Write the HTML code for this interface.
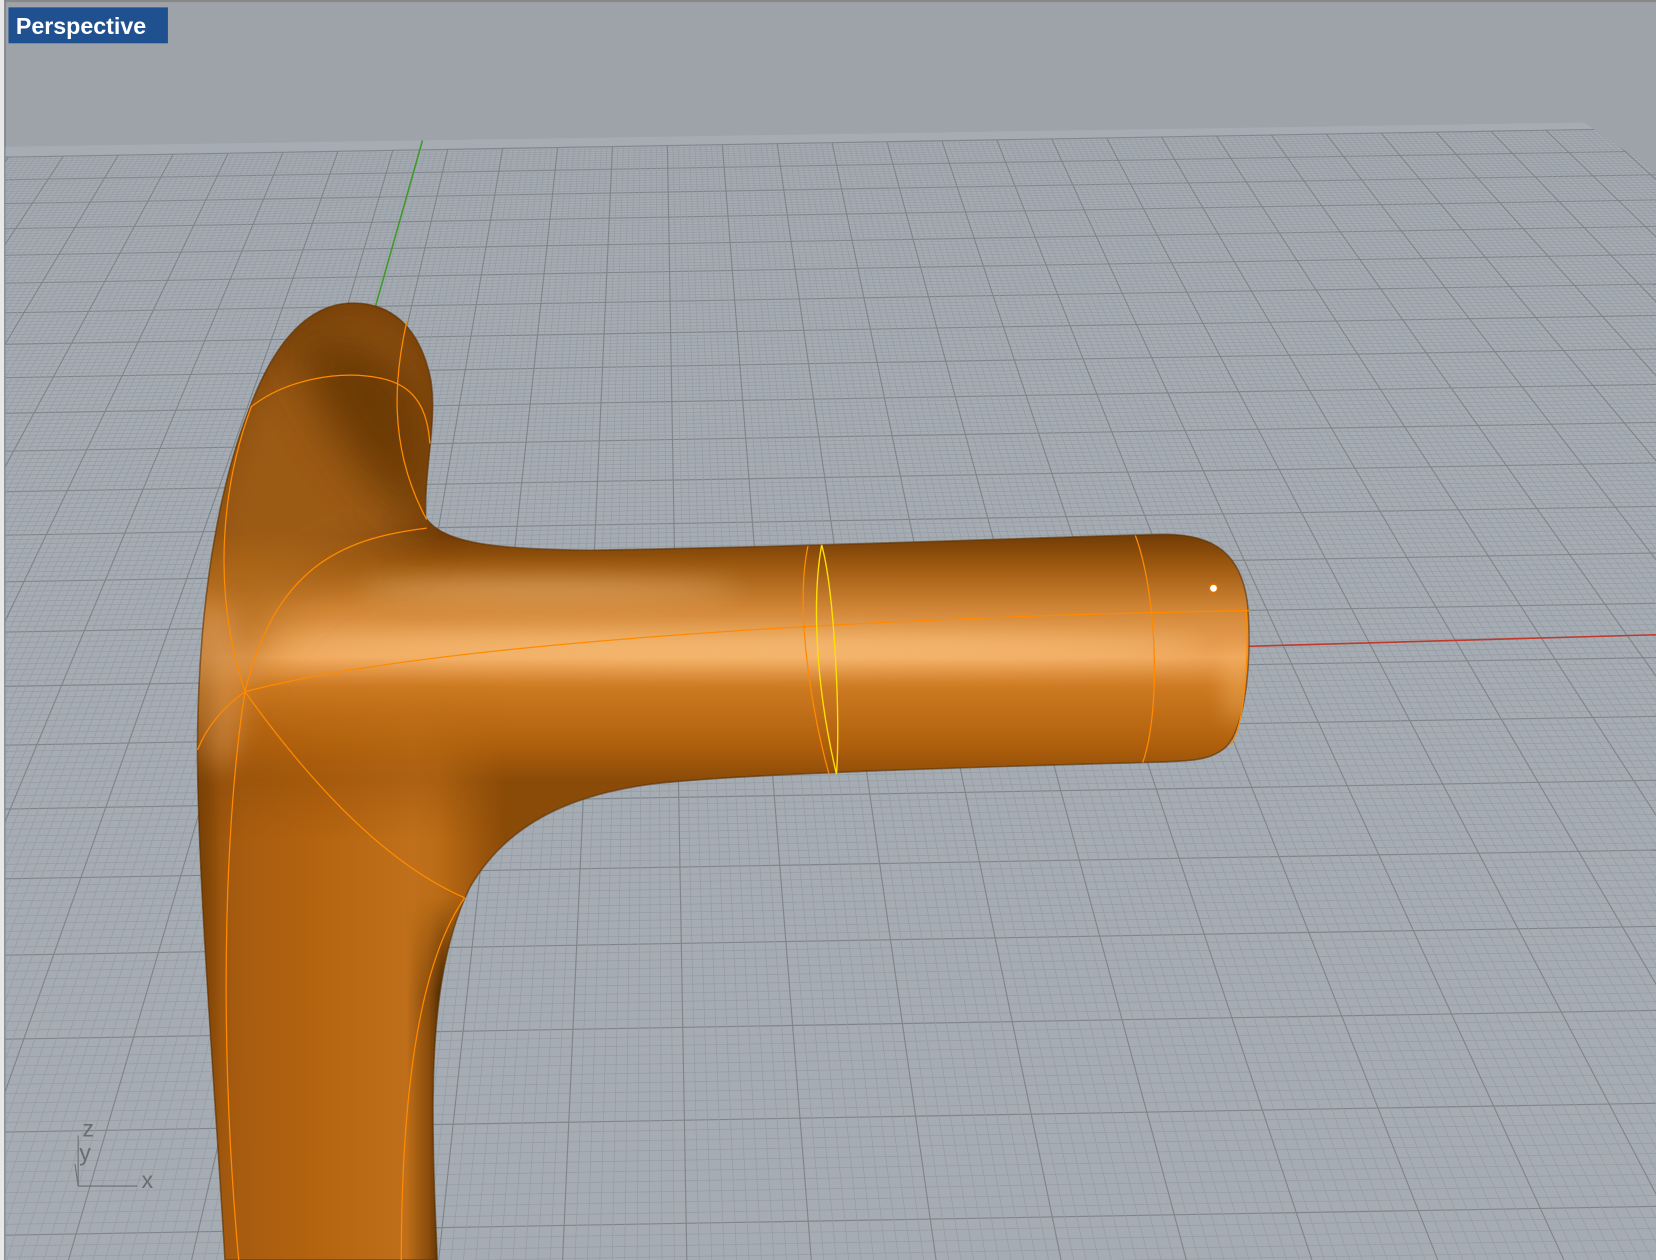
<!DOCTYPE html>
<html><head><meta charset="utf-8"><style>
html,body{margin:0;padding:0;width:1656px;height:1260px;overflow:hidden;background:#9ea3aa}
svg{display:block}
</style></head><body>
<svg id="s" width="1656" height="1260" viewBox="0 0 1568 1193" preserveAspectRatio="none" xmlns="http://www.w3.org/2000/svg">
<defs>
<clipPath id="plane"><polygon points="5,139 1500,116 1568,163 1568,1193 5,1193"/></clipPath>
<linearGradient id="arm" x1="0" y1="505" x2="0" y2="740" gradientUnits="userSpaceOnUse">
<stop offset="0" stop-color="#6e3a06"/><stop offset="0.12" stop-color="#9a560e"/>
<stop offset="0.3" stop-color="#d08536"/><stop offset="0.5" stop-color="#eea55a"/>
<stop offset="0.62" stop-color="#cd7a22"/><stop offset="0.85" stop-color="#b0600c"/><stop offset="1" stop-color="#8a4a08"/>
</linearGradient>
<linearGradient id="leg" x1="185" y1="0" x2="480" y2="0" gradientUnits="userSpaceOnUse">
<stop offset="0" stop-color="#7a4208"/><stop offset="0.08" stop-color="#a45a10"/>
<stop offset="0.4" stop-color="#b5640f"/><stop offset="0.7" stop-color="#c0701a"/><stop offset="0.78" stop-color="#bb6c16" stop-opacity="1"/><stop offset="1" stop-color="#b86812" stop-opacity="0"/>
</linearGradient>
<linearGradient id="edge" x1="385" y1="0" x2="418" y2="0" gradientUnits="userSpaceOnUse">
<stop offset="0" stop-color="#6a3804" stop-opacity="0"/><stop offset="0.6" stop-color="#7a4208" stop-opacity="0.7"/><stop offset="1" stop-color="#4a2802" stop-opacity="1"/>
</linearGradient>
<linearGradient id="fadeY" x1="0" y1="640" x2="0" y2="900" gradientUnits="userSpaceOnUse">
<stop offset="0" stop-color="#fff" stop-opacity="0"/><stop offset="0.6" stop-color="#fff" stop-opacity="1"/><stop offset="1" stop-color="#fff" stop-opacity="1"/>
</linearGradient>
<linearGradient id="fadeE" x1="0" y1="850" x2="0" y2="940" gradientUnits="userSpaceOnUse">
<stop offset="0" stop-color="#fff" stop-opacity="0"/><stop offset="1" stop-color="#fff" stop-opacity="1"/>
</linearGradient>
<mask id="legmask" maskUnits="userSpaceOnUse" x="0" y="0" width="1568" height="1193"><rect x="0" y="0" width="1568" height="1193" fill="url(#fadeY)"/></mask>
<mask id="edgemask" maskUnits="userSpaceOnUse" x="0" y="0" width="1568" height="1193"><rect x="0" y="0" width="1568" height="1193" fill="url(#fadeE)"/></mask>
<clipPath id="shape"><path id="sp" d=""/></clipPath>
<filter id="b8" filterUnits="userSpaceOnUse" x="0" y="0" width="1568" height="1193"><feGaussianBlur stdDeviation="12"/></filter>
<filter id="b20" filterUnits="userSpaceOnUse" x="0" y="0" width="1568" height="1193"><feGaussianBlur stdDeviation="22"/></filter>
</defs>
<rect x="0" y="0" width="1568" height="1193" fill="#9ea3aa"/>
<rect x="0" y="0" width="1568" height="2" fill="#888"/>
<rect x="0" y="0" width="4" height="1193" fill="#e8e8e8"/>
<rect x="4" y="0" width="1.5" height="1193" fill="#7d8186"/>
<g clip-path="url(#plane)">
<rect x="0" y="100" width="1568" height="1100" fill="#a6acb3"/>
<g id="grid" transform="rotate(-1.0 800 600)"></g>
</g>
<line x1="400" y1="133" x2="355" y2="292" stroke="#3f9a2a" stroke-width="1.5"/>
<line x1="1180" y1="612" x2="1568" y2="601" stroke="#c0392b" stroke-width="1.5"/>
<g id="obj"></g>
<rect x="8" y="7" width="151" height="34" fill="#1f5190"/>
<text x="15" y="32" font-family="Liberation Sans, sans-serif" font-weight="bold" font-size="22" fill="#fff">Perspective</text>
<g stroke="#6a6e73" stroke-width="1" fill="none">
<line x1="74" y1="1123" x2="130" y2="1123"/><line x1="74" y1="1123" x2="74" y2="1075"/><line x1="74" y1="1123" x2="71" y2="1102"/>
</g>
<g font-family="Liberation Sans, sans-serif" font-size="22" fill="#6a6e73">
<text x="78" y="1076">z</text><text x="75" y="1099">y</text><text x="134" y="1125">x</text>
</g>
</svg>
<script>
var NS="http://www.w3.org/2000/svg";
function el(p,t,a){var e=document.createElementNS(NS,t);for(var k in a)e.setAttribute(k,a[k]);p.appendChild(e);return e;}
var g=document.getElementById('grid');
var vx=640,vy=-700,C=835*40,t0=40;
for(var i=0;i<=400;i++){var t=t0-i*0.1; if(t<=14)break; var y=vy+C/t; if(y>1260)break;
 var maj=(i%10==0);
 el(g,'line',{x1:-200,y1:y,x2:1800,y2:y,stroke:maj?'#80858b':'#969ca3','stroke-width':maj?1.1:0.7});}
var base=135, sp=52;
for(var k=-400;k<=400;k++){var x0=640+k*sp/10; var maj=(k%10==0);
 var x2=vx+(x0-vx)*(1400-vy)/(base-vy);
 el(g,'line',{x1:x0,y1:base,x2:x2,y2:1400,stroke:maj?'#80858b':'#969ca3','stroke-width':maj?1.1:0.7});}
var d="M213,1193 C205,1050 186,820 187,700 C188,600 200,480 235,390 C255,335 285,290 330,287 C370,285 398,310 408,360 C414,400 402,440 403,490 C420,515 470,520 560,521 C800,517 1000,508 1100,506 C1150,505 1175,525 1181,570 C1186,620 1180,690 1160,708 C1145,720 1130,721 1080,722 C900,727 700,733 620,742 C540,752 480,780 445,840 C420,890 410,960 410,1050 C410,1120 413,1160 414,1193 Z";
document.getElementById('sp').setAttribute('d',d);
var o=document.getElementById('obj');
el(o,'path',{d:d,fill:'url(#arm)'});
var cg=el(o,'g',{'clip-path':'url(#shape)'});
el(cg,'rect',{x:180,y:300,width:300,height:900,fill:'url(#leg)',mask:'url(#legmask)'});
el(cg,'rect',{x:380,y:820,width:60,height:380,fill:'url(#edge)',mask:'url(#edgemask)'});
el(cg,'path',{d:"M180,560 C190,450 230,330 300,300 C380,280 420,330 410,420 C405,470 400,500 390,520 C330,520 260,560 230,640 C200,660 185,640 180,560 Z",fill:'#b06a1c',filter:'url(#b20)',opacity:0.7});
el(cg,'path',{d:"M270,320 C330,300 400,330 405,400 C405,450 400,480 400,500 C360,470 320,420 300,380 Z",fill:'#5e3204',filter:'url(#b20)',opacity:0.8});
el(cg,'ellipse',{cx:700,cy:612,rx:440,ry:13,fill:'#ffcf8a',opacity:0.6,filter:'url(#b8)'});
el(cg,'ellipse',{cx:520,cy:558,rx:180,ry:9,fill:'#ffd9a0',opacity:0.45,filter:'url(#b8)'});
el(cg,'ellipse',{cx:205,cy:650,rx:25,ry:80,fill:'#e0a060',opacity:0.5,filter:'url(#b8)'});
el(cg,'ellipse',{cx:1172,cy:650,rx:8,ry:35,fill:'#ffc070',opacity:0.7,filter:'url(#b8)'});
el(cg,'ellipse',{cx:190,cy:900,rx:12,ry:300,fill:'#6a3804',opacity:0.5,filter:'url(#b8)'});
el(o,'path',{d:d,fill:'none',stroke:'#5a3004','stroke-width':1.5,opacity:0.6});
var lines=["M232,655 C400,610 800,585 1183,578","M232,655 C260,540 320,510 404,500","M232,655 C300,750 370,820 440,850","M232,655 C200,560 210,460 238,385 C270,360 320,350 360,358 C395,365 405,390 407,420",
"M232,655 C215,760 205,960 226,1193","M232,655 C210,670 195,690 187,710","M440,850 C405,900 380,1000 380,1193",
"M385,305 C375,350 365,420 404,492","M1075,507 C1095,560 1100,670 1082,722","M765,517 C752,580 770,680 785,733","M1180,578 C1183,620 1178,690 1165,705"];
lines.forEach(function(p){el(o,'path',{d:p,fill:'none',stroke:'#ff8a00','stroke-width':1.2});});
el(o,'path',{d:"M778,516 C770,560 770,640 792,733 C796,680 790,560 778,516 Z",fill:'none',stroke:'#ffe000','stroke-width':1.3});
el(o,'circle',{cx:1149,cy:557,r:4,fill:'#fff',stroke:'#e07000','stroke-width':1.5});
</script>
</body></html>
